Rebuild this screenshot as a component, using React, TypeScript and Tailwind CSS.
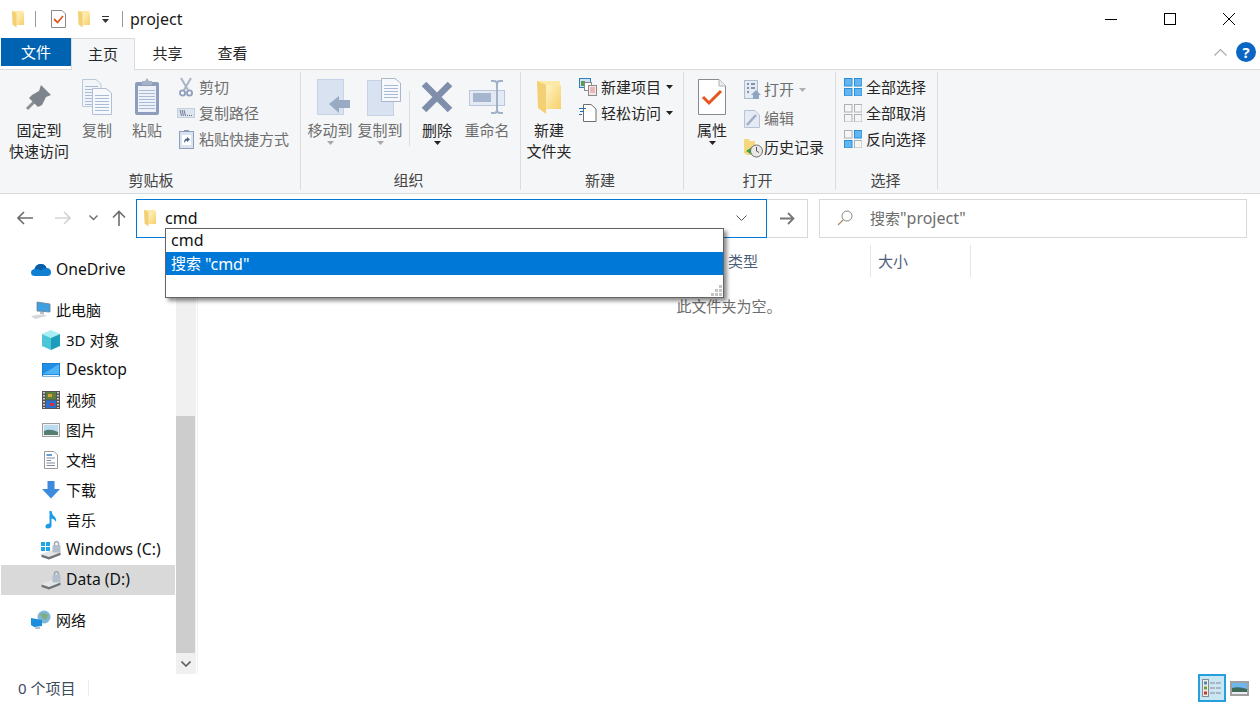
import React from 'react';

const Folder = ({ w = 14, h = 18 }: { w?: number; h?: number }) => (
  <svg width={w} height={h} viewBox="0 0 14 18" className="block shrink-0">
    <defs>
      <linearGradient id="fold" x1="0" y1="0" x2="1" y2="1">
        <stop offset="0" stopColor="#fff3c2" />
        <stop offset="1" stopColor="#f6d06a" />
      </linearGradient>
    </defs>
    <path d="M1 1 H12.5 V15 H5 Z" fill="#fce9a5" />
    <path d="M5.5 3 H13 V15 H5.5 Z" fill="url(#fold)" />
    <path d="M1 1 L5.5 3 V17.5 L1.5 14.5 Z" fill="#f3d074" />
  </svg>
);

const Caret = ({ color = '#333' }: { color?: string }) => (
  <svg width="7" height="4" viewBox="0 0 7 4" className="block shrink-0">
    <path d="M0 0 H7 L3.5 4 Z" fill={color} />
  </svg>
);

const Pin = () => (
  <svg width="28" height="28" viewBox="0 0 28 28" className="block">
    <path d="M2 26 L11 17" stroke="#8a9096" strokeWidth="3" />
    <path d="M16 2 L26 12 L21 14 L17 22 L13 24 L4 15 L7 12 L14 8 Z" fill="#7e848b" />
  </svg>
);

const DocLines = ({ x, y, w, n, gap = 3 }: { x: number; y: number; w: number; n: number; gap?: number }) => (
  <>
    {Array.from({ length: n }).map((_, i) => (
      <path key={i} d={`M${x} ${y + i * gap + 0.5} H${x + w}`} stroke="#a9bad4" strokeWidth="1" />
    ))}
  </>
);

const CopyIcon = () => (
  <svg width="30" height="36" viewBox="0 0 30 36" className="block">
    <path d="M0.5 0.5 H14 L19 5 V27.5 H0.5 Z" fill="#f1f4f9" stroke="#bcc9dd" />
    <DocLines x={3} y={7} w={13} n={7} />
    <path d="M10.5 9.5 H24 L29.5 14 V35.5 H10.5 Z" fill="#f6f8fb" stroke="#b0bfd6" />
    <DocLines x={13} y={16} w={14} n={6} />
  </svg>
);

const Clipboard = () => (
  <svg width="26" height="38" viewBox="0 0 26 38" className="block">
    <rect x="1" y="4" width="24" height="33" rx="2" fill="#8e9dbc" />
    <rect x="4" y="8" width="18" height="26" fill="#eef2f8" />
    <DocLines x={5} y={12} w={16} n={7} />
    <path d="M8 6 V3 H11 L13 0 L15 3 H18 V7 H8 Z" fill="#a7b2c8" />
  </svg>
);

const ScissorsIcon = () => (
  <svg width="14" height="20" viewBox="0 0 14 20" className="block">
    <path d="M2 1 L9 13 M12 1 L5 13" stroke="#aab4c6" strokeWidth="2" fill="none" />
    <circle cx="3.5" cy="16" r="2.6" fill="none" stroke="#8fa0bd" strokeWidth="1.8" />
    <circle cx="10.5" cy="16" r="2.6" fill="none" stroke="#8fa0bd" strokeWidth="1.8" />
  </svg>
);

const CopyPath = () => (
  <svg width="18" height="10" viewBox="0 0 18 10" className="block -ml-[2px]">
    <rect x="0.5" y="0.5" width="17" height="9" fill="#dfe5ef" stroke="#c3cedf" />
    <path d="M3 2 L4.5 8 M5 2 L6.5 8 M7 2 L8.5 8" stroke="#5c6f8f" strokeWidth="0.9" />
    <path d="M10 7.5 H11 M12 7.5 H13 M14 7.5 H15" stroke="#5c6f8f" />
  </svg>
);

const PasteShortcut = () => (
  <svg width="15" height="20" viewBox="0 0 15 20" className="block">
    <rect x="0.5" y="2.5" width="14" height="17" fill="#dbe3ef" stroke="#8e9dbc" />
    <path d="M5 3 V1 H10 V3 Z" fill="#8e9dbc" />
    <rect x="3" y="6" width="9" height="10" fill="#fff" />
    <path d="M5 14 C5 11 6 9.5 8 9.5 V8 L11 10.5 L8 13 V11.5 C7 11.5 6 12.5 5 14 Z" fill="#44638f" />
  </svg>
);

const MoveTo = () => (
  <svg width="34" height="36" viewBox="0 0 34 36" className="block ml-[7px]">
    <rect x="0.5" y="0.5" width="26" height="35" fill="#d8e2f0" stroke="#c6d3e6" />
    <path d="M12 25 L22 17 V21 H33 V29 H22 V34 Z" fill="#9aaac4" />
  </svg>
);

const CopyTo = () => (
  <svg width="34" height="38" viewBox="0 0 34 38" className="block ml-[7px]">
    <rect x="0.5" y="2.5" width="26" height="35" fill="#d8e2f0" stroke="#c6d3e6" />
    <path d="M14.5 0.5 H28 L33.5 5 V23.5 H14.5 Z" fill="#f6f8fb" stroke="#a9b7cc" />
    <DocLines x={17} y={7} w={14} n={5} />
  </svg>
);

const DeleteX = () => (
  <svg width="32" height="32" viewBox="0 0 32 32" className="block">
    <path d="M3 3 L29 29 M29 3 L3 29" stroke="#7f8eab" strokeWidth="6.5" />
  </svg>
);

const Rename = () => (
  <svg width="36" height="34" viewBox="0 0 36 34" className="block">
    <rect x="0.5" y="10.5" width="35" height="15" fill="#e4eaf3" stroke="#b9c7dc" />
    <rect x="4" y="13" width="18" height="9" fill="#a7b6cf" />
    <path d="M22 1 H25 Q28 1 28 4 V30 Q28 33 25 33 H22 M34 1 H31 Q28 1 28 4 M28 30 Q28 33 31 33 H34" fill="none" stroke="#a3b1c8" strokeWidth="2" />
  </svg>
);

const NewItem = () => (
  <svg width="18" height="18" viewBox="0 0 18 18" className="block">
    <rect x="0.5" y="0.5" width="11" height="9" fill="#cfe1f3" stroke="#2f7fb8" />
    <rect x="2" y="3" width="4" height="5" fill="#5b9b57" />
    <rect x="5.5" y="4.5" width="7" height="8" fill="#fff" stroke="#8a8a8a" />
    <rect x="9.5" y="7.5" width="8" height="10" fill="#f7e6e6" stroke="#8a8a8a" />
    <path d="M11 10 H16 M11 12 H16 M11 14 H16" stroke="#d98a8a" />
  </svg>
);

const EasyAccess = () => (
  <svg width="18" height="18" viewBox="0 0 18 18" className="block">
    <path d="M4.5 0.5 H12 L17 5 V17.5 H4.5 Z" fill="#fff" stroke="#6f6f6f" />
    <path d="M0 5.5 H7 M1 8.5 H5 M0 11.5 H3" stroke="#2b6fb0" strokeWidth="1" transform="translate(0 -1)" />
  </svg>
);

const Properties = () => (
  <svg width="28" height="36" viewBox="0 0 28 36" className="block">
    <path d="M0.5 0.5 H21 L27.5 7 V35.5 H0.5 Z" fill="#fff" stroke="#8a8a8a" />
    <path d="M21 0.5 V7 H27.5" fill="#eee" stroke="#b0b0b0" />
    <path d="M5 18 L11 24 L23 12" fill="none" stroke="#e8541e" strokeWidth="3" />
  </svg>
);

const OpenIcon = () => (
  <svg width="18" height="20" viewBox="0 0 18 20" className="block">
    <rect x="0.5" y="0.5" width="13" height="18" fill="#e6ebf3" stroke="#aebcd1" />
    <path d="M3 4 H5 M7 4 H11 M3 8 H5 M7 8 H11 M3 12 H5" stroke="#8494ae" strokeWidth="2" />
    <path d="M7 15 L12 10 L17 15 H15 V19 H9 V15 Z" fill="#8fa3c2" />
  </svg>
);

const EditIcon = () => (
  <svg width="16" height="18" viewBox="0 0 16 18" className="block">
    <path d="M0.5 0.5 H11 L15.5 5 V17.5 H0.5 Z" fill="#e6ebf3" stroke="#b6c3d6" />
    <path d="M3 15 L12 5" stroke="#9eaec6" strokeWidth="2.5" />
  </svg>
);

const HistoryIcon = () => (
  <svg width="20" height="20" viewBox="0 0 20 20" className="block">
    <path d="M0 1 H5 L6 3 H11 V17 H3 L0 15 Z" fill="#f5d77f" />
    <path d="M2 13 L8 9 V17 Z" fill="#3aa535" />
    <circle cx="12.5" cy="13" r="6" fill="#e8e8e8" stroke="#6e6e6e" />
    <path d="M12.5 9 V13 L15 14.5" stroke="#555" fill="none" />
  </svg>
);

const Squares = ({ on }: { on: boolean[] }) => (
  <svg width="18" height="18" viewBox="0 0 18 18" className="block">
    {[[0, 0], [10, 0], [0, 10], [10, 10]].map(([x, y], i) => (
      <rect
        key={i}
        x={x + 0.5}
        y={y + 0.5}
        width="7.5"
        height="7.5"
        fill={on[i] ? '#63b5f0' : '#f5f6f7'}
        stroke={on[i] ? '#2b8fd8' : '#b0b0b0'}
      />
    ))}
  </svg>
);

const Drive = ({ win }: { win?: boolean }) => (
  <svg width="20" height="20" viewBox="0 0 20 20" className="block">
    {win && (
      <g fill="#1fa6e8">
        <rect x="0" y="2" width="4" height="4" />
        <rect x="5" y="2" width="4" height="4" />
        <rect x="0" y="7" width="4" height="4" />
        <rect x="5" y="7" width="4" height="4" />
      </g>
    )}
    <path d="M0.5 14 L11 10 L19.5 12 V15 L8 19.5 L0.5 17 Z" fill="#e4e6e8" />
    <path d="M0.5 14.5 L8 17 L19.5 12.5 V15 L8 19.5 L0.5 17 Z" fill="#6f7478" />
    <rect x="11.5" y="5" width="8" height="7.5" rx="1" fill="#b4bfcc" />
    <path d="M13.5 5 V3 Q15.5 0 17.5 3 V5" fill="none" stroke="#9aa5b2" strokeWidth="1.4" />
  </svg>
);

const sideIcons: Record<string, React.ReactNode> = {
  cube: (
    <svg width="20" height="20" viewBox="0 0 20 20" className="block">
      <path d="M10 0 L19 4 L10 8 L1 4 Z" fill="#a8eef2" />
      <path d="M1 4 L10 8 V20 L1 16 Z" fill="#4cc6d6" />
      <path d="M19 4 L10 8 V20 L19 16 Z" fill="#1b9dbb" />
    </svg>
  ),
  desktop: (
    <svg width="18" height="14" viewBox="0 0 18 14" className="block">
      <rect x="0" y="0" width="18" height="13" fill="#1f8fe6" stroke="#0f72c4" />
      <path d="M1 11 L17 1 V11 Z" fill="#4fb4f4" />
      <path d="M1 12.5 H17" stroke="#e8f3fb" />
    </svg>
  ),
  video: (
    <svg width="18" height="18" viewBox="0 0 18 18" className="block">
      <rect width="18" height="18" fill="#555" />
      <rect x="4" y="1" width="10" height="7.5" fill="#5b7f3c" />
      <rect x="4" y="9.5" width="10" height="7.5" fill="#2d6fd0" />
      <rect x="6" y="3" width="4" height="3" fill="#d9a13a" />
      <rect x="8" y="12" width="4" height="3" fill="#c33" />
      <path d="M2 1 V17 M16 1 V17" stroke="#eee" strokeWidth="1.6" strokeDasharray="1.6 1.4" />
    </svg>
  ),
  image: (
    <svg width="18" height="14" viewBox="0 0 18 14" className="block">
      <rect x="0.5" y="0.5" width="17" height="13" fill="#f2f2f2" stroke="#a0a0a0" />
      <rect x="2" y="2" width="14" height="10" fill="#b9dcf0" />
      <path d="M2 8 Q8 5 16 9 V12 H2 Z" fill="#557d72" />
    </svg>
  ),
  doc: (
    <svg width="14" height="18" viewBox="0 0 14 18" className="block">
      <path d="M0.5 0.5 H10 L13.5 4 V17.5 H0.5 Z" fill="#fff" stroke="#9a9a9a" />
      <path d="M2.5 4 H8" stroke="#2e7cc4" strokeWidth="1.5" />
      <path d="M2.5 7 H11 M2.5 9.5 H7 M2.5 12 H11 M2.5 14.5 H11" stroke="#7f8ea3" />
    </svg>
  ),
  download: (
    <svg width="18" height="18" viewBox="0 0 18 18" className="block">
      <path d="M5.5 0 H12.5 V8 H18 L9 17.5 L0 8 H5.5 Z" fill="#3d8ade" />
    </svg>
  ),
  music: (
    <svg width="12" height="18" viewBox="0 0 12 18" className="block">
      <path d="M4.5 0 H6.5 Q7 4 10 6 Q12 8.5 10.5 11 Q10.5 8.5 6.5 7.5 V14.5 Q6.5 17.5 3 17.5 Q0 17.5 0.5 15 Q1 12.5 4.5 12.5 Z" fill="#1e9be8" />
    </svg>
  ),
  network: (
    <svg width="20" height="20" viewBox="0 0 20 20" className="block">
      <circle cx="13" cy="7" r="6.5" fill="#7eb7d8" />
      <path d="M9 4 Q13 2 17 5 L15 10 Q11 9 9 4 Z" fill="#7fae7a" />
      <path d="M0 8 L11 10 V16 L3 17 L0 15 Z" fill="#1b8fdc" />
      <path d="M4 17 H9 V19 H4 Z" fill="#b9c2cc" />
    </svg>
  ),
  pc: (
    <svg width="20" height="18" viewBox="0 0 20 18" className="block">
      <path d="M6 1 L19 3 V11 L6 10 Z" fill="#3f9fe0" stroke="#6f7f8f" strokeWidth="0.8" />
      <path d="M9 11 H13 V13 H9 Z" fill="#b9c2cc" />
      <path d="M0 15 L12 13 L16 15 L4 18 Z" fill="#d5d9dd" />
    </svg>
  ),
  cloud: (
    <svg width="20" height="14" viewBox="0 0 20 14" className="block">
      <path d="M4 13 Q0 13 0 9.5 Q0 6.5 3.5 6 Q5 1 10 1 Q14 1 15.5 5 Q20 5 20 9.5 Q20 13 16 13 Z" fill="#0f7fd4" />
      <path d="M3.5 6 Q5 1 10 1 Q14 1 15.5 5 Q12 5 10 7.5 Q7 5.5 3.5 6 Z" fill="#0a5ea8" />
    </svg>
  ),
};

const BigBtn = ({
  icon,
  lines,
  w,
  dim,
  caret,
}: {
  icon: React.ReactNode;
  lines: string[];
  w: number;
  dim?: boolean;
  caret?: 'dim' | 'dark';
}) => (
  <div className="flex flex-col items-center shrink-0" style={{ width: w }}>
    <div className="h-[40px] flex items-center justify-center">{icon}</div>
    <div className={`mt-[3px] text-center leading-[21px] whitespace-nowrap ${dim ? 'text-[#6e6e6e]' : 'text-[#262626]'}`}>
      {lines.map((l) => (
        <div key={l}>{l}</div>
      ))}
    </div>
    {caret && (
      <div className="mt-0">
        <Caret color={caret === 'dim' ? '#a8a8a8' : '#222'} />
      </div>
    )}
  </div>
);

const SmallBtn = ({
  icon,
  label,
  dim,
  caret,
  h = 26,
  iw = 22,
}: {
  icon: React.ReactNode;
  label: string;
  dim?: boolean;
  caret?: string;
  h?: number;
  iw?: number;
}) => (
  <div className="flex items-center whitespace-nowrap" style={{ height: h }}>
    <div className="flex items-center justify-start" style={{ width: iw }}>{icon}</div>
    <span className={dim ? 'text-[#6e6e6e]' : 'text-[#262626]'}>{label}</span>
    {caret && (
      <span className="ml-[5px]">
        <Caret color={caret} />
      </span>
    )}
  </div>
);

const Group = ({
  width,
  label,
  labelClass = '',
  children,
}: {
  width: number;
  label: string;
  labelClass?: string;
  children: React.ReactNode;
}) => (
  <div className="shrink-0 h-[118px] my-[2px] border-r border-[#dcdddf] flex flex-col" style={{ width }}>
    <div className="h-[97px] flex items-start">{children}</div>
    <div className={`h-[21px] text-center leading-[22px] text-[#444] ${labelClass}`}>{label}</div>
  </div>
);

const items: { key: string; label: string; icon: React.ReactNode; selected?: boolean; top?: boolean; latin?: boolean }[] = [
  { key: 'onedrive', label: 'OneDrive', icon: sideIcons.cloud, top: true, latin: true },
  { key: 'pc', label: '此电脑', icon: sideIcons.pc, top: true },
  { key: '3d', label: '3D 对象', icon: sideIcons.cube },
  { key: 'desktop', label: 'Desktop', icon: sideIcons.desktop, latin: true },
  { key: 'video', label: '视频', icon: sideIcons.video },
  { key: 'image', label: '图片', icon: sideIcons.image },
  { key: 'doc', label: '文档', icon: sideIcons.doc },
  { key: 'dl', label: '下载', icon: sideIcons.download },
  { key: 'music', label: '音乐', icon: sideIcons.music },
  { key: 'c', label: 'Windows (C:)', icon: <Drive win />, latin: true },
  { key: 'd', label: 'Data (D:)', icon: <Drive />, selected: true, latin: true },
  { key: 'net', label: '网络', icon: sideIcons.network, top: true },
];

const NavRow = ({
  label,
  icon,
  selected,
  top,
  latin,
}: {
  label: string;
  icon: React.ReactNode;
  selected?: boolean;
  top?: boolean;
  latin?: boolean;
}) => (
  <div className={`h-[30px] flex items-center whitespace-nowrap text-[#111] ${selected ? 'bg-[#d9d9d9]' : ''} ${top ? 'pl-[30px]' : 'pl-[40px]'}`}>
    <div className="w-[20px] mr-[5px] flex justify-center shrink-0">{icon}</div>
    <span className={latin ? 'text-[15.7px]' : ''}>{label}</span>
  </div>
);

export default function App() {
  return (
    <div className="relative w-[1260px] h-[704px] overflow-hidden bg-white flex flex-col text-[15px] font-['Noto_Sans','Noto_Sans_CJK_SC',sans-serif]">
      {/* title bar */}
      <div className="h-[38px] flex items-center shrink-0 pl-[11px]">
        <Folder />
        <div className="w-px h-[16px] bg-[#9a9a9a] ml-[10px] mr-[15px]" />
        <svg width="15" height="18" viewBox="0 0 15 18" className="block">
          <path d="M0.5 0.5 H11 L14.5 4 V17.5 H0.5 Z" fill="#fff" stroke="#8a8a8a" />
          <path d="M3 9 L6.5 12.5 L12 6" fill="none" stroke="#e8541e" strokeWidth="1.8" />
        </svg>
        <div className="ml-[11px]"><Folder /></div>
        <div className="ml-[11px] flex flex-col items-center gap-[2px]">
          <div className="w-[7px] h-px bg-[#333]" />
          <Caret />
        </div>
        <div className="w-px h-[16px] bg-[#9a9a9a] ml-[13px] mr-[7px]" />
        <span className="text-[16px] text-[#1a1a1a]">project</span>
        <div className="ml-auto flex mr-[2px]">
          <div className="w-[59px] h-[38px] flex items-center justify-center">
            <div className="w-[12px] h-px bg-black" />
          </div>
          <div className="w-[59px] h-[38px] flex items-center justify-center">
            <div className="w-[12px] h-[12px] border border-black" />
          </div>
          <div className="w-[59px] h-[38px] flex items-center justify-center">
            <svg width="12" height="12" viewBox="0 0 12 12" className="block">
              <path d="M0 0 L12 12 M12 0 L0 12" stroke="#000" />
            </svg>
          </div>
        </div>
      </div>

      {/* tabs */}
      <div className="h-[32px] flex shrink-0 relative border-b border-[#dadbdc] pl-px">
        <div className="w-[70px] h-[28px] bg-[#0063b1] text-white flex items-center justify-center">文件</div>
        <div className="w-[64px] h-[32px] bg-[#f5f6f7] border border-b-0 border-[#dadbdc] flex items-center justify-center text-[#262626]">主页</div>
        <div className="w-[65px] h-[30px] flex items-center justify-center text-[#262626]">共享</div>
        <div className="w-[65px] h-[30px] flex items-center justify-center text-[#262626]">查看</div>
        <div className="ml-auto flex items-center h-[27px] mr-[4px] gap-[9px]">
          <svg width="13" height="8" viewBox="0 0 13 8" className="block">
            <path d="M0.5 7.5 L6.5 1.5 L12.5 7.5" fill="none" stroke="#aaa" strokeWidth="1.2" />
          </svg>
          <div className="w-[20px] h-[20px] rounded-full bg-[#0a66c2] text-white font-bold text-[15px] leading-[20px] text-center">?</div>
        </div>
      </div>

      {/* ribbon */}
      <div className="h-[124px] bg-[#f5f6f7] border-b border-[#dadbdc] shrink-0 flex text-[#262626]">
        <Group width={301} label="剪贴板" labelClass="pl-[2px]">
          <div className="flex pt-[5px] pl-[9px]">
            <BigBtn icon={<Pin />} lines={['固定到', '快速访问']} w={60} />
            <div className="ml-[3px]"><BigBtn icon={<CopyIcon />} lines={['复制']} w={50} dim /></div>
            <BigBtn icon={<Clipboard />} lines={['粘贴']} w={50} dim />
            <div className="ml-[7px] -mt-[3px]">
              <SmallBtn icon={<ScissorsIcon />} label="剪切" dim iw={20} />
              <SmallBtn icon={<CopyPath />} label="复制路径" dim iw={20} />
              <SmallBtn icon={<PasteShortcut />} label="粘贴快捷方式" dim iw={20} />
            </div>
          </div>
        </Group>
        <Group width={220} label="组织" labelClass="pr-[4px]">
          <div className="flex pt-[5px] pl-[4px]">
            <BigBtn icon={<MoveTo />} lines={['移动到']} w={50} dim caret="dim" />
            <BigBtn icon={<CopyTo />} lines={['复制到']} w={50} dim caret="dim" />
            <div className="w-px h-[55px] bg-[#dcdddf] mt-[14px] ml-[4px]" />
            <div className="ml-[2px]"><BigBtn icon={<DeleteX />} lines={['删除']} w={50} caret="dark" /></div>
            <BigBtn icon={<Rename />} lines={['重命名']} w={50} dim />
          </div>
        </Group>
        <Group width={163} label="新建" labelClass="pr-[4px]">
          <div className="flex pt-[5px] pl-[3px]">
            <BigBtn icon={<Folder w={28} h={36} />} lines={['新建', '文件夹']} w={50} />
            <div className="ml-[5px] -mt-[3px]">
              <SmallBtn icon={<NewItem />} label="新建项目" caret="#222" />
              <SmallBtn icon={<EasyAccess />} label="轻松访问" caret="#222" />
            </div>
          </div>
        </Group>
        <Group width={152} label="打开" labelClass="pr-[4px]">
          <div className="flex pt-[5px] pl-[3px]">
            <BigBtn icon={<Properties />} lines={['属性']} w={50} caret="dark" />
            <div className="ml-[7px] -mt-[2px]">
              <SmallBtn icon={<OpenIcon />} label="打开" dim caret="#b0b0b0" h={29} iw={20} />
              <SmallBtn icon={<EditIcon />} label="编辑" dim h={29} iw={20} />
              <SmallBtn icon={<HistoryIcon />} label="历史记录" h={29} iw={20} />
            </div>
          </div>
        </Group>
        <Group width={102} label="选择" labelClass="pr-[2px]">
          <div className="pl-[8px] pt-[2px]">
            <SmallBtn icon={<Squares on={[true, true, true, true]} />} label="全部选择" />
            <SmallBtn icon={<Squares on={[false, false, false, false]} />} label="全部取消" />
            <SmallBtn icon={<Squares on={[false, true, true, false]} />} label="反向选择" />
          </div>
        </Group>
      </div>

      {/* address row */}
      <div className="h-[48px] shrink-0 flex items-center">
        <div className="w-[136px] h-full flex items-center shrink-0">
          <div className="w-[50px] flex justify-center">
            <svg width="16" height="14" viewBox="0 0 16 14" className="block">
              <path d="M16 7 H1.5 M7 1 L1 7 L7 13" fill="none" stroke="#6d6d6d" strokeWidth="1.6" />
            </svg>
          </div>
          <div className="w-[26px] flex justify-center">
            <svg width="16" height="14" viewBox="0 0 16 14" className="block">
              <path d="M0 7 H14.5 M9 1 L15 7 L9 13" fill="none" stroke="#d4d4d4" strokeWidth="1.6" />
            </svg>
          </div>
          <div className="w-[34px] flex justify-center">
            <svg width="9" height="6" viewBox="0 0 9 6" className="block">
              <path d="M0.5 0.5 L4.5 4.5 L8.5 0.5" fill="none" stroke="#6d6d6d" strokeWidth="1.4" />
            </svg>
          </div>
          <div className="w-[18px] flex justify-center">
            <svg width="14" height="16" viewBox="0 0 14 16" className="block">
              <path d="M7 16 V1.5 M1 7.5 L7 1.5 L13 7.5" fill="none" stroke="#6d6d6d" strokeWidth="1.6" />
            </svg>
          </div>
        </div>
        <div className="w-[631px] h-[39px] border border-[#0078d7] flex items-center pl-[6px] pr-[19px] shrink-0">
          <Folder />
          <span className="ml-[8px] text-[16px] text-[#111]">cmd</span>
          <svg width="11" height="7" viewBox="0 0 11 7" className="block ml-auto">
            <path d="M0.5 0.5 L5.5 5.5 L10.5 0.5" fill="none" stroke="#555" strokeWidth="1" />
          </svg>
        </div>
        <div className="w-[41px] h-[39px] border border-l-0 border-[#d9d9d9] flex items-center justify-center shrink-0">
          <svg width="15" height="13" viewBox="0 0 15 13" className="block">
            <path d="M0 6.5 H13.5 M8 1 L13.5 6.5 L8 12" fill="none" stroke="#777" strokeWidth="1.8" />
          </svg>
        </div>
        <div className="ml-[11px] w-[428px] h-[39px] border border-[#d9d9d9] flex items-center pl-[17px] text-[#6d6d6d] shrink-0">
          <svg width="16" height="16" viewBox="0 0 16 16" className="block">
            <circle cx="10" cy="6" r="5" fill="none" stroke="#8a8a8a" />
            <path d="M6.5 9.5 L1 15" stroke="#b08a60" strokeWidth="1.2" />
          </svg>
          <span className="ml-[17px]">搜索<span className="text-[16px]">"project"</span></span>
        </div>
      </div>

      {/* main */}
      <div className="flex-1 flex min-h-0">
        <div className="w-[176px] shrink-0 pl-px pr-px pt-[13px]">
          <NavRow {...items[0]} />
          <div className="h-[10px]" />
          {items.slice(1, 11).map((it) => (
            <NavRow key={it.key} {...it} />
          ))}
          <div className="h-[10px]" />
          <NavRow {...items[11]} />
        </div>
        <div className="w-[20px] shrink-0 bg-[#f0f0f0] flex flex-col">
          <div className="h-[174px]" />
          <div className="h-[237px] w-[19px] bg-[#cdcdcd]" />
          <div className="flex-1 flex items-center justify-center">
            <svg width="10" height="6" viewBox="0 0 10 6" className="block">
              <path d="M0.5 0.5 L5 5 L9.5 0.5" fill="none" stroke="#606060" strokeWidth="1.6" />
            </svg>
          </div>
        </div>
        <div className="w-px bg-[#f0f0f0] ml-px shrink-0" />
        <div className="flex-1 min-w-0">
          <div className="h-[32px] mt-[3px] flex text-[#4c607a]">
            <div className="ml-[523px] w-[150px] h-full border-r border-[#e5e5e5] flex items-center pl-[7px]">类型</div>
            <div className="w-[100px] h-full border-r border-[#e5e5e5] flex items-center pl-[7px]">大小</div>
          </div>
          <div className="mt-[17px] text-center text-[#6d6d6d] leading-[24px]">此文件夹为空。</div>
        </div>
      </div>

      {/* status bar */}
      <div className="h-[30px] shrink-0 flex items-center pl-[18px] pb-[2px] text-[#3c4a5e]">
        <span className="w-[70px]">0 个项目</span>
        <div className="w-px h-[16px] bg-[#ececec]" />
        <div className="ml-auto flex items-center mr-[11px]">
          <div className="w-[28px] h-[28px] bg-[#c9e6f6] border-2 border-[#26a0da] flex items-center justify-center">
            <svg width="20" height="18" viewBox="0 0 20 18" className="block">
              <rect x="0.5" y="0.5" width="6" height="17" fill="#eee" stroke="#8a8a8a" />
              <rect x="2" y="2.5" width="3" height="3" fill="#4a88b5" />
              <rect x="2" y="7.5" width="3" height="3" fill="#7a9b3c" />
              <rect x="2" y="12.5" width="3" height="3" fill="#c0392b" />
              <path d="M8 4 H13 M14 4 H19 M8 9 H13 M14 9 H19 M8 14 H13 M14 14 H19" stroke="#8a8a8a" strokeWidth="1.2" />
            </svg>
          </div>
          <div className="ml-[4px] w-[19px] h-[15px] border-2 border-[#a0a0a0] bg-[#bcdcf4] overflow-hidden">
            <svg width="15" height="11" viewBox="0 0 15 11" className="block">
              <rect width="15" height="11" fill="#6fb6ee" />
              <path d="M0 5 Q7 3 15 6 V9 H0 Z" fill="#3f6a5c" />
              <rect y="9" width="15" height="2" fill="#e8eef2" />
            </svg>
          </div>
        </div>
      </div>

      {/* autocomplete dropdown */}
      <div className="absolute left-[165px] top-[228px] w-[559px] h-[70px] bg-white border border-[#646464] shadow-[3px_3px_4px_rgba(0,0,0,0.45)] text-[#111]">
        <div className="h-[23px] flex items-center pl-[5px] pb-[1px] text-[16px]">cmd</div>
        <div className="h-[23px] flex items-center pl-[5px] bg-[#0078d7] text-white whitespace-pre">搜索 <span className="text-[16px]">"cmd"</span></div>
        <div className="absolute right-[1px] bottom-[1px] grid grid-cols-3 gap-px w-[11px]">
          <div />
          <div />
          <div className="w-[3px] h-[3px] bg-[#c4c4c4]" />
          <div />
          <div className="w-[3px] h-[3px] bg-[#c4c4c4]" />
          <div className="w-[3px] h-[3px] bg-[#c4c4c4]" />
          <div className="w-[3px] h-[3px] bg-[#c4c4c4]" />
          <div className="w-[3px] h-[3px] bg-[#c4c4c4]" />
          <div className="w-[3px] h-[3px] bg-[#c4c4c4]" />
        </div>
      </div>
    </div>
  );
}
